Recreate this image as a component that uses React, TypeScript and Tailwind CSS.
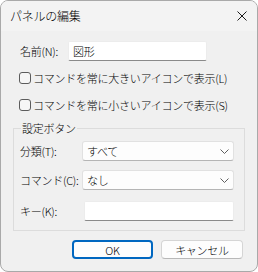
import React from 'react';

function Chevron() {
  return (
    <svg width="9" height="5" viewBox="0 0 9 5" className="shrink-0">
      <path d="M0.5 0.5 L4.5 4.5 L8.5 0.5" fill="none" stroke="#5f5f5f" strokeWidth="1" />
    </svg>
  );
}

function Select({ value }: { value: string }) {
  return (
    <div className="w-[152px] h-[20px] flex items-center justify-between pl-[4px] pr-[4px] bg-[#fdfdfd] border border-[#e1e1e1] border-b-[#b5b5b5] rounded-[3px]">
      <span>{value}</span>
      <Chevron />
    </div>
  );
}

function Check({ label }: { label: string }) {
  return (
    <div className="flex items-center h-[14px] ml-[6px]">
      <span className="w-[12px] h-[12px] rounded-[3px] border border-[#5c5c5c] bg-[#f6f6f6] mr-[2px]" />
      <span>{label}</span>
    </div>
  );
}

export default function App() {
  return (
    <div className="w-[258px] h-[272px] bg-white text-[11px] leading-[14px] tracking-[-0.25px] font-light text-black font-['Noto_Sans_CJK_JP',sans-serif]">
      <div className="h-full flex flex-col rounded-[8px] border border-[#a9a9a9] bg-[#f0f0f0] overflow-hidden">
        {/* Title bar */}
        <div className="h-[30px] shrink-0 flex items-center justify-between pl-[9px] pr-[10px] bg-[#f3f3f3]">
          <span className="text-[12px]">パネルの編集</span>
          <svg width="10" height="10" viewBox="0 0 10 10">
            <path d="M0.5 0.5 L9.5 9.5 M9.5 0.5 L0.5 9.5" stroke="#1a1a1a" strokeWidth="1" />
          </svg>
        </div>

        <div className="flex flex-col pl-[12px]">
          {/* Name */}
          <div className="flex items-center mt-[10px] ml-[7px]">
            <span className="w-[48px]">名前(N):</span>
            <div className="w-[139px] h-[20px] flex items-center pl-[4px] bg-white border border-[#ececec] border-b-[#8a8a8a] rounded-[2px]">
              図形
            </div>
          </div>

          <div className="mt-[10px]">
            <Check label="コマンドを常に大きいアイコンで表示(L)" />
          </div>
          <div className="mt-[13px]">
            <Check label="コマンドを常に小さいアイコンで表示(S)" />
          </div>

          {/* Group box */}
          <fieldset className="mt-[9px] w-[232px] border border-[#dcdcdc] pb-[9px]">
            <legend className="ml-[7px] px-[1px]">設定ボタン</legend>
            <div className="flex items-center pl-[6px] mt-[6px]">
              <span className="w-[62px]">分類(T):</span>
              <Select value="すべて" />
            </div>
            <div className="flex items-center pl-[6px] mt-[9px]">
              <span className="w-[62px] whitespace-nowrap">コマンド(C):</span>
              <Select value="なし" />
            </div>
            <div className="flex items-center pl-[6px] mt-[11px]">
              <span className="w-[64px]">キー(K):</span>
              <div className="w-[150px] h-[20px] bg-white border border-[#ececec] border-b-[#8a8a8a] rounded-[2px]" />
            </div>
          </fieldset>

          {/* Buttons */}
          <div className="flex justify-end gap-[8px] mt-[9px] pr-[14px]">
            <button className="w-[81px] h-[19px] flex items-center justify-center bg-[#fdfdfd] border-2 border-[#0067c0] rounded-[4px]">
              OK
            </button>
            <button className="w-[82px] h-[19px] flex items-center justify-center bg-[#fdfdfd] border border-[#d5d5d5] border-b-[#b8b8b8] rounded-[4px]">
              キャンセル
            </button>
          </div>
        </div>
      </div>
    </div>
  );
}
